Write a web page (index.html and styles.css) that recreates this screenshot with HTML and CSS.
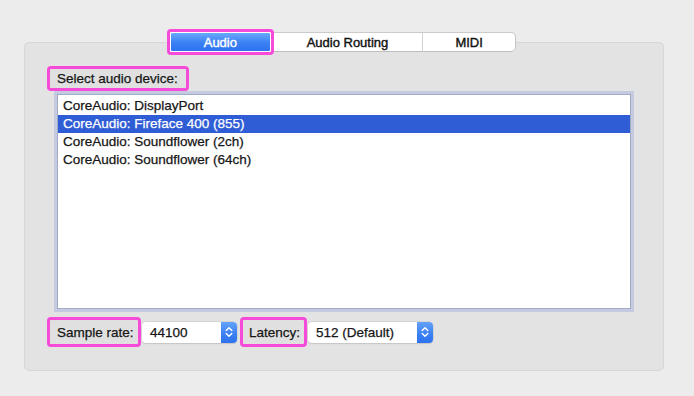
FILE: index.html
```html
<!DOCTYPE html>
<html>
<head>
<meta charset="utf-8">
<link rel="stylesheet" href="styles.css">
</head>
<body>
<div class="wrap">
  <div class="tabs">
    <div class="tab tab-sel"><span class="tab-fill">Audio</span></div>
    <div class="tab tab-mid">Audio Routing</div>
    <div class="tab tab-last">MIDI</div>
  </div>
  <div class="panel">
    <div class="hl hl-top">Select audio device:</div>
    <div class="list">
      <div class="row">CoreAudio: DisplayPort</div>
      <div class="row row-sel">CoreAudio: Fireface 400 (855)</div>
      <div class="row">CoreAudio: Soundflower (2ch)</div>
      <div class="row">CoreAudio: Soundflower (64ch)</div>
    </div>
    <div class="controls">
      <div class="hl hl-bot hl-rate">Sample rate:</div>
      <div class="select sel-rate">
        <span class="sel-val">44100</span>
        <span class="sel-btn"><svg width="8" height="12" viewBox="0 0 8 12"><path d="M1.2 4.6 L4 1.8 L6.8 4.6 M1.2 7.4 L4 10.2 L6.8 7.4" fill="none" stroke="#fff" stroke-width="1.4" stroke-linecap="round" stroke-linejoin="round"/></svg></span>
      </div>
      <div class="hl hl-bot hl-lat">Latency:</div>
      <div class="select sel-lat">
        <span class="sel-val">512 (Default)</span>
        <span class="sel-btn"><svg width="8" height="12" viewBox="0 0 8 12"><path d="M1.2 4.6 L4 1.8 L6.8 4.6 M1.2 7.4 L4 10.2 L6.8 7.4" fill="none" stroke="#fff" stroke-width="1.4" stroke-linecap="round" stroke-linejoin="round"/></svg></span>
      </div>
    </div>
  </div>
</div>
</body>
</html>
```
FILE: styles.css
```css
html, body {
  margin: 0;
  padding: 0;
  background: #ececec;
  width: 694px;
  height: 396px;
  overflow: hidden;
  font-family: "Liberation Sans", Arial, sans-serif;
  font-size: 13.5px;
  color: #161616;
  -webkit-text-stroke: 0.25px currentColor;
}

.wrap {
  padding: 32px 0 0 24px;
}

.tabs {
  position: relative;
  z-index: 1;
  display: flex;
  margin-left: 143px;
  width: 349px;
  height: 20px;
  margin-bottom: -10px;
}

.tab {
  box-sizing: border-box;
  height: 20px;
  display: flex;
  align-items: center;
  justify-content: center;
  background: #ffffff;
  border-top: 1px solid #cbcbcb;
  border-bottom: 1px solid #bdbdbd;
  font-size: 13px;
  color: #111111;
  -webkit-text-stroke: 0.4px currentColor;
}

.tab-sel {
  width: 107px;
  height: 26px;
  margin: -3px -1px -3px 0;
  border: 3px solid #f64bd9;
  border-radius: 4px;
  padding: 1px;
  background: #ffffff;
  position: relative;
  z-index: 2;
}

.tab-fill {
  flex: 1;
  align-self: stretch;
  display: flex;
  align-items: center;
  justify-content: center;
  background: linear-gradient(#6aa9fb, #3b80f4 55%, #2f72ef);
  color: #ffffff;
  border-radius: 1px;
}

.tab-mid {
  width: 151px;
  border-right: 1px solid #d2d2d2;
}

.tab-last {
  width: 93px;
  border-right: 1px solid #c4c4c4;
  border-radius: 0 5px 5px 0;
}

.panel {
  box-sizing: border-box;
  width: 640px;
  height: 329px;
  background: #e3e3e3;
  border: 1px solid #d6d6d6;
  border-radius: 5px;
  padding: 23px 0 0 22px;
}

.hl {
  box-sizing: border-box;
  border: 3px solid #f64bd9;
  border-radius: 4px;
  display: flex;
  align-items: center;
  background: #e0e0e0;
  white-space: nowrap;
}

.hl-top {
  width: 142px;
  height: 25px;
  padding-left: 7px;
}

.list {
  box-sizing: border-box;
  margin: 3px 0 0 10px;
  width: 574px;
  height: 215px;
  background: #ffffff;
  border: 1px solid #a3abc6;
  box-shadow: 0 0 0 3px #c4cadf;
  padding-top: 2px;
}

.row {
  height: 18px;
  line-height: 18px;
  padding-left: 5px;
  white-space: nowrap;
}

.row-sel {
  background: #2f5dd6;
  color: #ffffff;
}

.controls {
  display: flex;
  align-items: center;
  margin-top: 8px;
  height: 30px;
}

.hl-bot {
  height: 30px;
  padding-left: 7px;
}

.hl-rate {
  width: 94px;
}

.hl-lat {
  width: 67px;
  margin-left: 3px;
  padding-left: 6px;
}

.select {
  box-sizing: border-box;
  height: 21px;
  margin-left: 1px;
  display: flex;
  align-items: stretch;
  background: #ffffff;
  border-radius: 4px;
  box-shadow: 0 0 0 0.5px #c6c6c6, 0 1px 1px rgba(0,0,0,0.12);
}

.sel-rate {
  width: 95px;
}

.sel-lat {
  width: 125px;
}

.sel-val {
  flex: 1;
  display: flex;
  align-items: center;
  padding-left: 8px;
  white-space: nowrap;
}

.sel-btn {
  width: 16px;
  display: flex;
  align-items: center;
  justify-content: center;
  border-radius: 0 4px 4px 0;
  background: linear-gradient(#64a3fa, #3a7ff3 60%, #2f72ee);
}
```
